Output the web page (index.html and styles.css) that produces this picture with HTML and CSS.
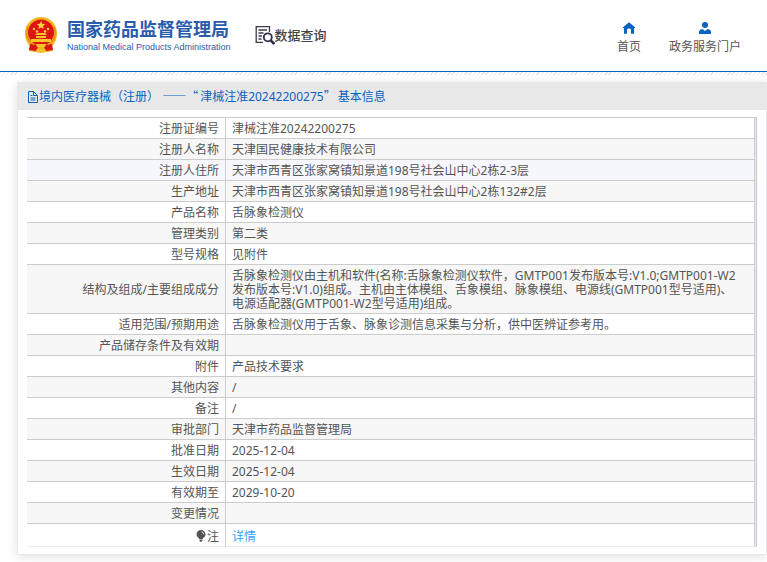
FILE: index.html
```html
<!DOCTYPE html>
<html lang="zh-CN">
<head>
<meta charset="utf-8">
<title>国家药品监督管理局 数据查询</title>
<link rel="stylesheet" href="styles.css">
</head>
<body>
<header class="site-header">
  <a class="brand" href="#">
    <svg class="emblem" viewBox="0 0 32 36" aria-hidden="true">
      <path fill="#f2b51d" d="M16 0C7 0 0 7 0 16c0 6 2 10 5 13l-1 5 6 1 6 1 6-1 6-1-1-5c3-3 5-7 5-13C32 7 25 0 16 0z"/>
      <circle cx="16" cy="15.500" r="13" fill="#df1515"/>
      <path fill="#ffd43a" d="M16 4l1.200 2.700 3 .3-2.200 2 .6 3L16 10.500 13.400 12l.6-3-2.200-2 3-.3z"/>
      <g fill="#ffd43a"><circle cx="9" cy="12" r="1.200"/><circle cx="23" cy="12" r="1.200"/><circle cx="12" cy="14.500" r="1.200"/><circle cx="20" cy="14.500" r="1.200"/></g>
      <path fill="#f7c52c" d="M10 18l2-2h8l2 2zM11 19h10v2H11zM6 22h20v3H6z"/>
      <path fill="#d71616" d="M5 27l8 1 3-1 3 1 8-1 1 6-7 1-2-4h-6l-2 4-7-1z"/>
      <path fill="#f5c22b" d="M11 27h10l-1 3h-8zM12 32h8l1 3H11z"/>
      <path fill="none" stroke="#df7b16" d="M3 10C0 18 3 25 9 28M29 10c3 8 0 15-6 18"/>
    </svg>
    <span class="brand-text">
      <span class="brand-name">国家药品监督管理局</span>
      <span class="brand-sub">National Medical Products Administration</span>
    </span>
  </a>
  <a class="query" href="#">
    <svg class="query-icon" viewBox="0 0 20 20" aria-hidden="true">
      <path fill="none" stroke="#3c3c4c" stroke-width="1.300" d="M14.500 7V1.700H1.200v15.600H8M3.500 5h8.500M3.500 8h5M3.500 11h3.500M3.500 14h3"/>
      <circle cx="12.800" cy="12.300" r="4" fill="#fff" stroke="#2f2f4a" stroke-width="1.800"/>
      <path stroke="#2f2f4a" stroke-width="2.600" d="M15.700 15.300l3.600 3.700"/>
    </svg>
    <span>数据查询</span>
  </a>
  <nav class="nav">
    <a class="nav-link" href="#">
      <svg viewBox="0 0 12 12" aria-hidden="true"><path fill="#0b62c1" d="M6 .3L0 5.300V6h1v5.700h3V7.800q0-1.300 2-1.300t2 1.300v3.900h3V6h1v-.7z"/></svg>
      <span>首页</span>
    </a>
    <a class="nav-link" href="#">
      <svg viewBox="0 0 12 12" aria-hidden="true"><circle cx="6" cy="3" r="3" fill="#0b62c1"/><path fill="#0b62c1" d="M0 12V10q0-2.500 3.500-3L6 9l2.500-2Q12 7.500 12 10v2z"/></svg>
      <span>政务服务门户</span>
    </a>
  </nav>
</header>
<main class="page">
  <section class="card">
    <h1 class="card-title">
      <svg class="doc-icon" viewBox="0 0 12 12" aria-hidden="true"><path fill="none" stroke="#0b62c1" d="M1.500.5h5l4 4v7h-9zM6.500.5v4h4M3.500 4.500h2M3.500 7h5M3.500 9h5"/></svg>
      <span>境内医疗器械（注册） <span class="wide">——“</span>津械注准20242200275<span class="wide">”</span>基本信息</span>
    </h1>
    <div class="table-frame">
      <table class="info">
        <tbody>
          <tr><th scope="row">注册证编号</th><td>津械注准20242200275</td></tr>
          <tr><th scope="row">注册人名称</th><td>天津国民健康技术有限公司</td></tr>
          <tr class="active"><th scope="row">注册人住所</th><td>天津市西青区张家窝镇知景道198号社会山中心2栋2-3层</td></tr>
          <tr><th scope="row">生产地址</th><td>天津市西青区张家窝镇知景道198号社会山中心2栋132#2层</td></tr>
          <tr><th scope="row">产品名称</th><td>舌脉象检测仪</td></tr>
          <tr><th scope="row">管理类别</th><td>第二类</td></tr>
          <tr><th scope="row">型号规格</th><td>见附件</td></tr>
          <tr><th scope="row">结构及组成/主要组成成分</th><td>舌脉象检测仪由主机和软件(名称:舌脉象检测仪软件，GMTP001发布版本号:V1.0;GMTP001-W2发布版本号:V1.0)组成。主机由主体模组、舌象模组、脉象模组、电源线(GMTP001型号适用)、电源适配器(GMTP001-W2型号适用)组成。</td></tr>
          <tr><th scope="row">适用范围/预期用途</th><td>舌脉象检测仪用于舌象、脉象诊测信息采集与分析，供中医辨证参考用。</td></tr>
          <tr><th scope="row">产品储存条件及有效期</th><td></td></tr>
          <tr><th scope="row">附件</th><td>产品技术要求</td></tr>
          <tr><th scope="row">其他内容</th><td>/</td></tr>
          <tr><th scope="row">备注</th><td>/</td></tr>
          <tr><th scope="row">审批部门</th><td>天津市药品监督管理局</td></tr>
          <tr><th scope="row">批准日期</th><td>2025-12-04</td></tr>
          <tr><th scope="row">生效日期</th><td>2025-12-04</td></tr>
          <tr><th scope="row">有效期至</th><td>2029-10-20</td></tr>
          <tr><th scope="row">变更情况</th><td></td></tr>
          <tr class="note"><th scope="row"><svg class="bulb" viewBox="0 0 10 12" aria-hidden="true"><path fill="#555" d="M5 0a4.500 4.500 0 0 0-4.500 4.500C.5 7 3 7.500 3.200 9h3.600C7 7.500 9.500 7 9.500 4.500A4.500 4.500 0 0 0 5 0zM3.500 9.500h3V11L5 12l-1.500-1z"/><path fill="none" stroke="#fff" stroke-width=".8" d="M5.500 1.800q2.200.3 2.200 2.500"/></svg>注</th><td><a href="#">详情</a></td></tr>
        </tbody>
      </table>
    </div>
  </section>
</main>
</body>
</html>
```
FILE: styles.css
```css
* {
  box-sizing: border-box;
}

body {
  margin: 0;
  background: #fff;
  color: #555;
  font: 12px/14px "Noto Sans", "Noto Sans CJK SC", sans-serif;
}

a {
  color: inherit;
  text-decoration: none;
}

.site-header {
  display: flex;
  align-items: center;
  height: 72px;
  padding: 0 26px 2px 25px;
  border-bottom: 1px solid #0b62b8;
}

.brand {
  display: flex;
  align-items: center;
  gap: 10px;
  color: #2b5cab;
}

.emblem {
  width: 32px;
  height: 36px;
}

.brand-text {
  display: flex;
  flex-direction: column;
}

.brand-name {
  font-size: 18px;
  font-weight: 700;
  line-height: 24px;
}

.brand-sub {
  font: 9px/12px "Liberation Sans", sans-serif;
}

.query {
  display: flex;
  align-items: center;
  margin-left: 24px;
  color: #444;
  font-size: 13px;
  font-weight: 500;
}

.query-icon {
  width: 20px;
  height: 20px;
}

.nav {
  display: flex;
  gap: 28px;
  margin-left: auto;
  padding-top: 6px;
}

.nav-link {
  display: flex;
  flex-direction: column;
  align-items: center;
  gap: 6px;
}

.nav-link svg {
  width: 12px;
  height: 12px;
}

.page {
  padding: 10px 0 8px 17px;
  background: repeating-linear-gradient(135deg, #e8e8e8 0 1px, #fff 1px 3px) top / 100% 3px no-repeat;
}

.card {
  padding-bottom: 7px;
  border: 1px solid #e8e8ee;
  background: #fff;
  box-shadow: 0 2px 10px rgba(0, 0, 0, 0.12);
}

.card-title {
  display: flex;
  align-items: center;
  height: 27px;
  margin: 0;
  padding-left: 9px;
  background: #e8e8e8;
  color: #0b62c1;
  font-size: 12px;
  font-weight: 400;
}

.doc-icon {
  width: 12px;
  height: 12px;
}

.wide {
  margin-right: 2px;
  font-family: "Noto Sans CJK SC", sans-serif;
}

.table-frame {
  margin: 7px 9px 0;
  padding-right: 1px;
  border-top: 1px solid #ccc;
  border-right: 1px solid #c8c8cc;
  background: #ebebf2;
}

.info {
  width: 100%;
  border-spacing: 0;
  table-layout: fixed;
  background: #fff;
}

.info th,
.info td {
  height: 21px;
  padding: 4px 6px 2px;
  border-right: 1px solid #ccc;
  border-bottom: 1px solid #ccc;
  vertical-align: middle;
}

.info td {
  padding-right: 10px;
}

.info th {
  width: 199px;
  font-weight: 400;
  text-align: right;
}

.info tr:nth-child(even) {
  background: #f7f7f7;
}

.info .active {
  background: #f5f7fc;
}

.info .note th,
.info .note td {
  height: 23px;
  padding-top: 6px;
  border-bottom-color: #ebebf5;
}

.note a {
  color: #409eff;
}

.bulb {
  width: 10px;
  height: 12px;
  margin-right: 1px;
  vertical-align: -1px;
}
```
